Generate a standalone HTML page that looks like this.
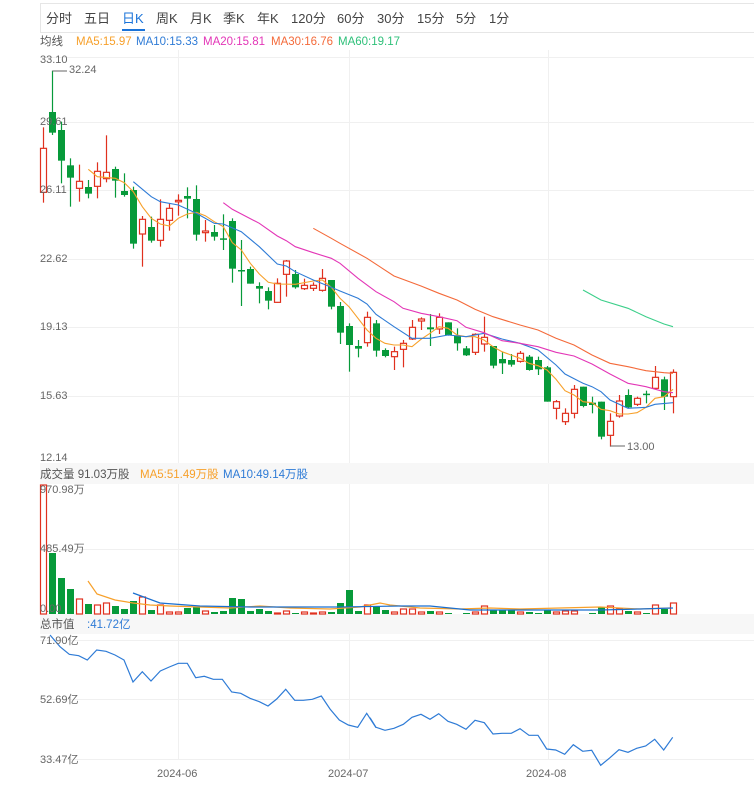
<!DOCTYPE html>
<html><head><meta charset="utf-8"><style>
body{margin:0;background:#fff;width:754px;height:787px;overflow:hidden;font-family:"Liberation Sans","Noto Sans CJK SC",sans-serif;}
svg{position:absolute;left:0;top:0}
</style></head><body>
<svg id="s" width="754" height="787" xmlns="http://www.w3.org/2000/svg" font-family="Liberation Sans, Noto Sans CJK SC, sans-serif">
<rect x="40.5" y="3.5" width="720" height="29" fill="#fff" stroke="#e6e6e6"/>
<g font-size="13" fill="#444">
<text x="46" y="23">分时</text><text x="84" y="23">五日</text><text x="122" y="23" fill="#1a73d9">日K</text>
<text x="156" y="23">周K</text><text x="190" y="23">月K</text><text x="223" y="23">季K</text><text x="257" y="23">年K</text>
<text x="291" y="23">120分</text><text x="337" y="23">60分</text><text x="377" y="23">30分</text><text x="417" y="23">15分</text><text x="456" y="23">5分</text><text x="489" y="23">1分</text>
</g>
<rect x="122" y="29" width="23" height="2" fill="#1a73d9"/>
<g font-size="11.5"><text x="40" y="45" fill="#555">均线</text>
<text x="76" y="45" fill="#f7a02a">MA5:15.97</text><text x="136" y="45" fill="#2e7bd6">MA10:15.33</text>
<text x="203" y="45" fill="#e336b7">MA20:15.81</text><text x="271" y="45" fill="#f46a3a">MA30:16.76</text><text x="338" y="45" fill="#2fc07a">MA60:19.17</text></g>
<g id="grid" stroke="#f0f0f0" stroke-width="1"></g>
<rect x="40" y="463" width="714" height="21" fill="#f7f7f7"/>
<rect x="40" y="614" width="714" height="20" fill="#f7f7f7"/>
<g font-size="11.5"><text x="40" y="478" fill="#555">成交量 91.03万股</text>
<text x="140" y="478" fill="#f7a02a">MA5:51.49万股</text><text x="223" y="478" fill="#2e7bd6">MA10:49.14万股</text>
<text x="40" y="628" fill="#555">总市值</text><text x="87" y="628" fill="#2e7bd6">:41.72亿</text></g>
<g id="c"></g>
<g font-size="11" fill="#666">
<text x="40" y="63">33.10</text><text x="40" y="125">29.61</text><text x="40" y="193">26.11</text><text x="40" y="262">22.62</text>
<text x="40" y="330">19.13</text><text x="40" y="399">15.63</text><text x="40" y="461">12.14</text>
<text x="40" y="493">970.98万</text><text x="40" y="552">485.49万</text><text x="40" y="612">0.00</text>
<text x="40" y="644">71.90亿</text><text x="40" y="703">52.69亿</text><text x="40" y="763">33.47亿</text>
<text x="157" y="777">2024-06</text><text x="328" y="777">2024-07</text><text x="526" y="777">2024-08</text>
<text x="69" y="73">32.24</text><text x="627" y="450">13.00</text></g>
<polyline points="52.3,71 67,71" fill="none" stroke="#666"/>
<polyline points="610,446 625,446" fill="none" stroke="#666"/>
</svg>
<script>
var NS="http://www.w3.org/2000/svg",c=document.getElementById('c'),g=document.getElementById('grid');
function el(t,a,p){var e=document.createElementNS(NS,t);for(var k in a)e.setAttribute(k,a[k]);(p||c).appendChild(e);return e;}
[57,122,190,259,327,396,464].forEach(function(y){el('line',{x1:40,x2:754,y1:y+.5,y2:y+.5},g)});
[549,614,640,699,759].forEach(function(y){el('line',{x1:40,x2:754,y1:y+.5,y2:y+.5},g)});
[178.5,349.5,548.5].forEach(function(x){el('line',{x1:x,x2:x,y1:50,y2:760},g)});
var A=[[295,427,232,458,1],[186,248,62,255,0],[240,332,215,400,0],[346,383,325,470,0],[394,415,344,455,1],[411,431,390,445,0],[364,409,337,445,1],[367,386,256,397,1],[357,392,350,443,0],[423,435,370,440,0],[420,581,410,596,0],[508,552,498,650,1],[531,572,500,578,0],[508,571,448,590,1],[475,511,460,542,1],[451,455,433,497,1],[438,446,412,505,0],[447,554,406,572,0],[543,548,510,575,1],[546,560,525,572,0],[565,568,493,600,0],[513,656,505,698,0],[660,664,570,768,0],[657,701,650,701,0],[708,716,697,760,0],[723,752,712,778,0],[700,757,685,758,1],[633,673,630,740,1],[672,712,660,716,0],[706,716,686,720,1],[706,715,697,723,1],[685,721,657,725,1],[690,770,690,778,0]];
var B=[[258,338,246,372,0],[318,375,310,455,0],[378,386,360,412,0],[292,368,275,380,1],[310,392,300,410,0],[390,408,385,412,0],[395,410,380,450,1],[370,388,360,442,1],[322,357,300,360,1],[297,303,292,330,1],[322,328,282,378,0],[292,327,280,342,1],[307,345,307,347,0],[348,370,325,392,0],[385,406,378,408,0],[343,397,340,405,1],[352,372,290,395,1],[378,437,378,445,0],[417,430,395,462,0],[420,434,402,440,0],[400,424,393,428,1],[410,450,405,452,0],[420,448,410,465,0],[442,545,438,545,0],[545,565,540,598,1],[580,605,565,615,1],[508,580,495,595,1],[500,558,500,562,0],[548,555,530,580,0],[545,650,545,658,0],[604,646,580,680,1],[543,588,525,593,1],[525,562,508,565,0],[535,553,530,558,1],[521,525,512,550,0],[472,505,438,508,1],[478,530,470,570,0],[457,530,448,580,1]];
var C=[];A.forEach(function(d){C.push([50+d[0]/3,50+d[1]/3,50+d[2]/3,50+d[3]/3,d[4]])});
B.forEach(function(d){C.push([220+d[0]/3,220+d[1]/3,220+d[2]/3,220+d[3]/3,d[4]])});
var R="#e0301e",G="#079a3a";
C.forEach(function(d,i){var x=43.3+i*9,col=d[4]?R:G,xm=Math.round(x)+.5;
 el('line',{x1:xm,x2:xm,y1:d[2],y2:d[3],stroke:col,'stroke-width':1.2});
 var h=Math.max(1.5,d[1]-d[0]);
 if(d[4])el('rect',{x:xm-3,y:d[0],width:6,height:h,fill:'#fff',stroke:col,'stroke-width':1.2});
 else el('rect',{x:xm-3.5,y:d[0],width:7,height:h,fill:col});});
function ml(a,b,col){var pts=[];a.forEach(function(p){if(p[0]<925)pts.push([30+p[0]/3,50+p[1]/3])});b.forEach(function(p){pts.push([340+p[0]/3,220+p[1]/3])});
 el('polyline',{points:pts.map(function(p){return p[0].toFixed(1)+','+p[1].toFixed(1)}).join(' '),fill:'none',stroke:col,'stroke-width':1.1});}
ml([[175,358],[202,380],[256,385],[283,398],[310,425],[337,470],[364,505],[391,522],[418,528],[445,505],[472,492],[499,487],[526,497],[553,515],[580,530],[607,578],[634,600],[661,640],[688,672],[715,697],[742,702],[796,703],[850,693],[877,690],[904,712]],
[[0,235],[27,260],[54,295],[81,330],[108,355],[135,370],[162,375],[189,375],[216,380],[243,358],[270,340],[297,320],[324,325],[351,345],[378,350],[405,350],[432,360],[459,380],[486,395],[513,405],[540,415],[567,430],[594,437],[621,450],[648,478],[675,512],[702,525],[729,545],[756,548],[783,568],[810,572],[837,582],[864,582],[891,578],[918,562],[945,535],[972,530],[999,508]],'#f7a02a');
ml([[310,395],[364,440],[391,455],[445,465],[499,490],[553,520],[580,522],[634,545],[688,590],[742,642],[769,648],[796,665],[850,690],[904,712]],
[[0,213],[54,235],[81,252],[108,283],[162,320],[216,355],[270,355],[324,345],[378,350],[432,340],[486,357],[540,370],[594,390],[648,435],[675,462],[729,490],[756,500],[783,515],[810,540],[864,565],[918,562],[945,553],[999,548]],'#2e7bd6');
ml([[580,458],[607,478],[688,520],[742,558],[769,572],[796,590],[850,608],[904,625]],
[[0,130],[54,175],[108,215],[162,245],[189,265],[243,280],[297,290],[351,302],[378,322],[432,338],[486,362],[540,370],[594,380],[648,397],[702,408],[756,432],[810,462],[864,490],[918,500],[972,515],[999,518]],'#e336b7');
ml([[850,535],[904,565]],
[[0,70],[81,115],[162,168],[243,198],[297,220],[351,240],[405,268],[459,290],[540,315],[594,330],[648,355],[702,375],[756,405],[810,430],[864,440],[918,452],[972,458],[999,460]],'#f46a3a');
ml([],[[729,210],[783,240],[864,265],[918,290],[972,312],[999,320]],'#3ccf8a');
var V=[[485,1],[553,0],[578,0],[589,0],[599,1],[604,0],[605,1],[603,1],[606,0],[609,0],[601,0],[597,1],[610,0],[605,1],[612,1],[612,1],[608,0],[607,0],[611,1],[612,0],[611,0],[598,0],[599,0],[611,0],[609,0],[611,0],[613,1],[611,1],[613,0],[612,1],[613,1],[612,1],[612,0],[603,0],[590,0],[611,0],[605,1],[606,0],[610,0],[612,1],[609,1],[609,1],[612,1],[611,0],[612,1],[613,0],[614,0],[613,0],[612,1],[606,1],[610,0],[610,0],[610,0],[612,1],[612,0],[613,0],[610,0],[612,1],[611,1],[611,1],[614,0],[613,0],[607,0],[606,1],[609,1],[611,0],[612,1],[613,0],[605,1],[609,0],[603,1]];
V.forEach(function(v,i){var x=Math.round(43.3+i*9)+.5;
 if(v[1])el('rect',{x:x-3,y:v[0],width:6,height:614-v[0],fill:'#fff',stroke:R,'stroke-width':1.2});
 else el('rect',{x:x-3.5,y:v[0],width:7,height:614-v[0],fill:G});});
function rl(pts,col){el('polyline',{points:pts.map(function(p){return p.join(',')}).join(' '),fill:'none',stroke:col,'stroke-width':1.2});}
rl([[88,581],[97,594],[115,600],[133,603],[150,605],[170,606],[200,607],[230,608],[260,606],[290,608],[330,609],[360,607],[380,603],[390,605],[420,608],[460,609],[490,608],[520,609],[560,608],[600,607],[640,609],[670,608]],'#f7a02a');
rl([[133,593],[160,603],[200,606],[250,607],[300,607],[340,607],[400,606],[430,606],[470,610],[520,610],[560,610],[600,610],[640,609],[673,608]],'#1a6fd0');
var M1=[[150,60],[180,95],[208,118],[236,122],[262,135],[290,105],[318,109],[345,120],[372,135],[399,201],[427,170],[453,198],[481,168],[508,156],[535,145],[562,145],[587,188],[613,184],[640,193],[667,193],[695,231],[722,235],[750,250],[778,260],[804,273],[830,252],[857,223],[884,256],[910,256],[937,253],[964,243],[990,282],[1018,315],[1045,330],[1073,337],[1100,295],[1128,338]];
var M2=[[0,308],[18,337],[45,346],[72,340],[100,328],[126,307],[153,298],[180,313],[206,296],[234,319],[260,328],[288,343],[315,316],[343,323],[369,357],[396,355],[424,355],[450,341],[477,361],[504,361],[530,402],[557,405],[584,418],[610,389],[638,409],[665,406],[692,451],[720,428],[747,404],[774,412],[800,400],[827,393],[854,373],[881,405],[908,367]];
var P=M1.map(function(p){return [(p[0]/3).toFixed(1),(615+p[1]/3).toFixed(1)]}).concat(M2.map(function(p){return [(370+p[0]/3).toFixed(1),(615+p[1]/3).toFixed(1)]}));
rl(P,'#2e7bd6');
</script>
</body></html>
